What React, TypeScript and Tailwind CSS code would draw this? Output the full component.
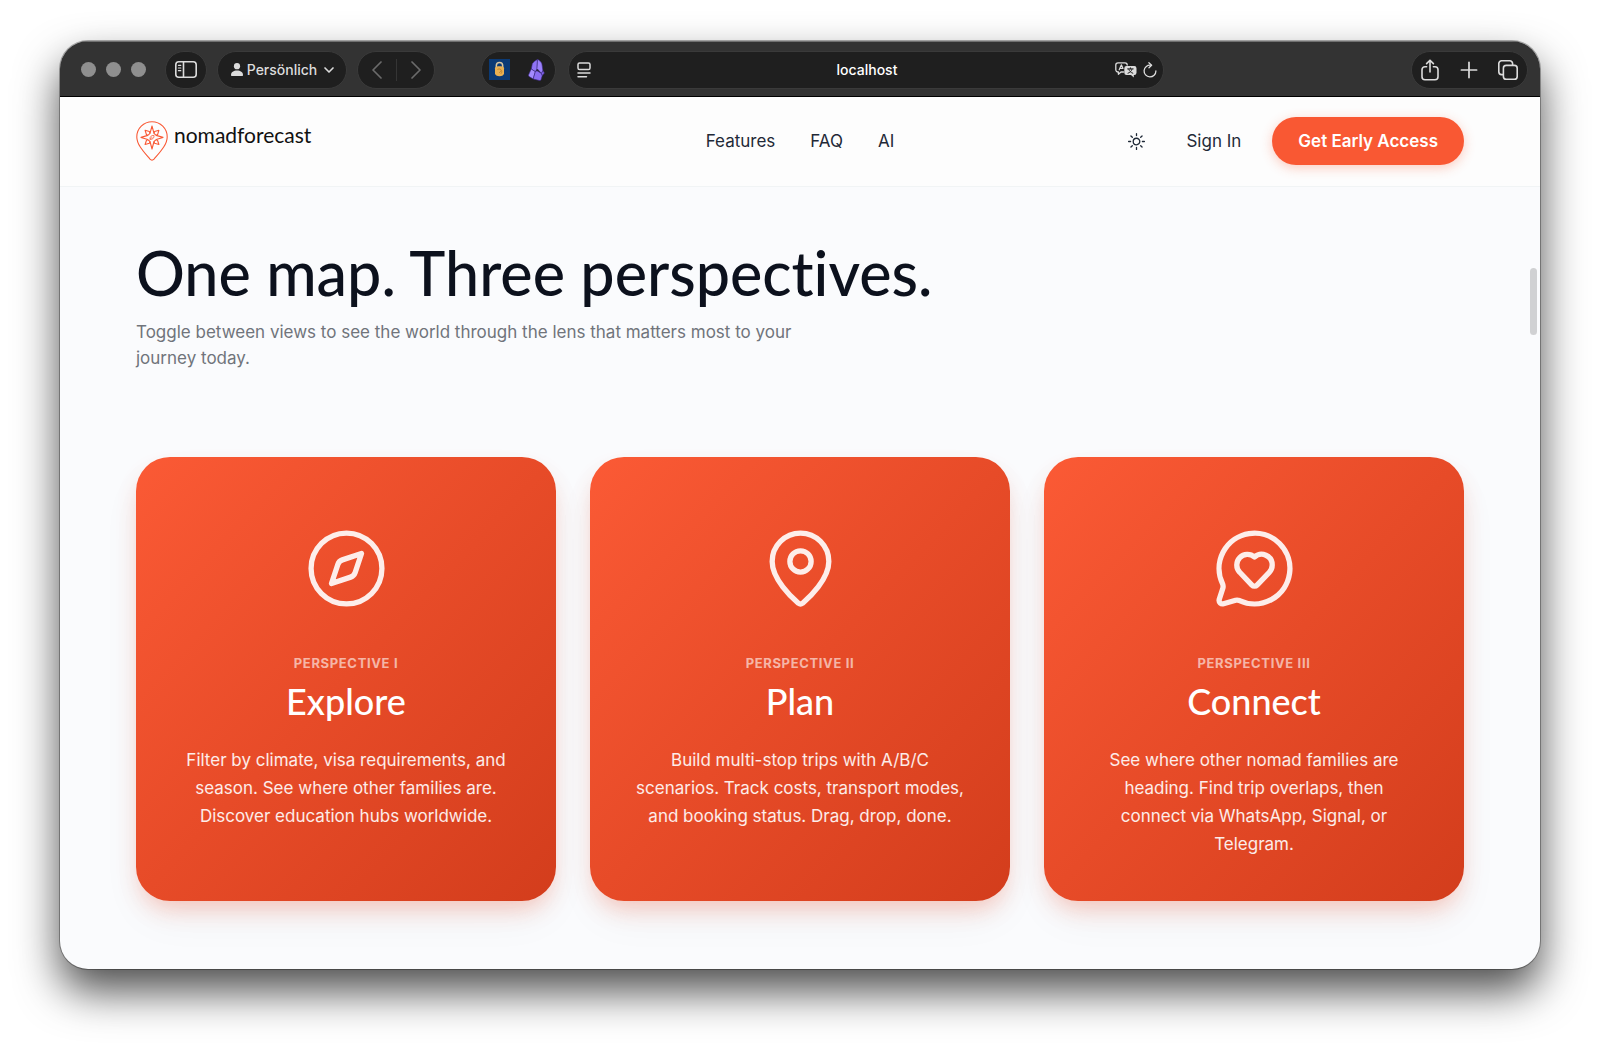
import { ChevronDown, ChevronLeft, ChevronRight, Compass, MapPin, MessageCircleHeart, Plus, type LucideIcon } from "lucide-react";

type Perspective = {
    label: string;
    title: string;
    text: string;
    icon: LucideIcon;
};

const perspectives: Perspective[] = [
    {
        label: "Perspective I",
        title: "Explore",
        text: "Filter by climate, visa requirements, and season. See where other families are. Discover education hubs worldwide.",
        icon: Compass,
    },
    {
        label: "Perspective II",
        title: "Plan",
        text: "Build multi-stop trips with A/B/C scenarios. Track costs, transport modes, and booking status. Drag, drop, done.",
        icon: MapPin,
    },
    {
        label: "Perspective III",
        title: "Connect",
        text: "See where other nomad families are heading. Find trip overlaps, then connect via WhatsApp, Signal, or Telegram.",
        icon: MessageCircleHeart,
    },
];

const pill = "flex h-[38px] shrink-0 items-center rounded-full border border-[#3a3a3a] bg-[#1f1f1f]";

function SidebarIcon() {
    return (
        <svg viewBox="0 0 22 17" className="h-[17px] w-[22px]" fill="none" stroke="currentColor" strokeWidth="1.6" strokeLinecap="round">
            <rect x="0.8" y="0.8" width="20.4" height="15.4" rx="3" />
            <path d="M8.5 1v15" />
            <path d="M3.4 4.3h2.4M3.4 7h2.4M3.4 9.7h2.4" strokeWidth="1.2" />
        </svg>
    );
}

function PersonIcon() {
    return (
        <svg viewBox="0 0 12 13" className="h-[13px] w-3" fill="currentColor">
            <circle cx="6" cy="3.2" r="3.1" />
            <path d="M0 12c0-3 2.6-4.6 6-4.6s6 1.6 6 4.6c0 .6-.3 1-1 1H1c-.7 0-1-.4-1-1Z" />
        </svg>
    );
}

function LockExtensionIcon() {
    return (
        <svg viewBox="0 0 21 21" className="size-[21px]">
            <rect width="21" height="21" fill="#0b3a75" />
            <path d="M7.3 9V6.800a3.200 3.200 0 0 1 6.400 0V9" fill="none" stroke="#d9c7a0" strokeWidth="1.5" />
            <path d="M6 9.200C6 7.800 8 7.200 10.500 7.200s4.500.6 4.500 2v5c0 1.900-2 3-4.500 3S6 16.100 6 14.200Z" fill="#e9b052" />
            <path d="M8.500 10.500c1.400-1 3.400-.6 3.700.8.2 1.300-1.600 1.100-1.700 2.600M12.600 11.500c.5 1.300 0 2.500-.8 3.300" fill="none" stroke="#b07a2a" strokeWidth="0.8" />
        </svg>
    );
}

function CrystalExtensionIcon() {
    return (
        <svg viewBox="0 0 17 22" className="h-[22px] w-[17px]" stroke="#3b2a80" strokeWidth="0.6" strokeLinejoin="round">
            <path d="M9.500.6C8 .8 4.600 4 4.300 4.700L3.300 10l4 2.700 1.800-3Z" fill="#8f73f5" />
            <path d="M9.500.6 9 9.600l4.500 4.800 1.400-2.800-1-6.800C13.500 3.600 10.800.4 9.500.6Z" fill="#9b80fb" />
            <path d="M3.200 10 .6 15.800c-.3.800 0 1.400.6 1.800l4 2.400 2.100-7.300Z" fill="#a48bff" />
            <path d="M7.300 12.700 5.200 20l6.200 1.500c.9.200 1.500-.2 1.700-1l1.200-4-.9-2.100-4.400-2.700Z" fill="#8b6ef3" />
            <path d="m14.900 11.600-1.400 2.800.8 2.200 2.100-2.600Z" fill="#8364ea" />
        </svg>
    );
}

function PageSettingsIcon() {
    return (
        <svg viewBox="0 0 14 16" className="h-4 w-3.5" fill="none" stroke="currentColor" strokeWidth="1.5" strokeLinecap="round">
            <rect x="1" y="0.9" width="12" height="6.6" rx="1.6" />
            <path d="M1 11h12M1 14.700h8.500" />
        </svg>
    );
}

function TranslateIcon() {
    return (
        <svg viewBox="0 0 22 16" className="h-4 w-[22px]" fill="none" stroke="currentColor" strokeLinecap="round" strokeLinejoin="round">
            <path d="M8.500 10H6l-2.600 2.200V10H3A2.200 2.200 0 0 1 .8 7.800V3A2.200 2.200 0 0 1 3 .8h7A2.200 2.200 0 0 1 12.200 3" strokeWidth="1.3" />
            <path d="m4.200 7.800 2.200-5 1.600 3.600M4.900 6.300H7.500" strokeWidth="1.2" />
            <path d="M11.500 4h7.800A2.200 2.200 0 0 1 21.500 6.200v4.600a2.200 2.200 0 0 1-2.200 2.200h-.5v2.600L16 13h-4.500a2.200 2.200 0 0 1-2.200-2.200V6.200A2.200 2.200 0 0 1 11.500 4Z" fill="currentColor" stroke="none" />
            <path d="M12.600 6.900h5.600M15.400 5.800v1M17 7.200c-.5 2-2 3.400-4 4M13.800 7.200c.5 2 2 3.400 4 4" stroke="#1f1f1f" strokeWidth="1" />
        </svg>
    );
}

function ReloadIcon() {
    return (
        <svg viewBox="0 0 14 16" className="h-4 w-3.5" fill="none" stroke="currentColor" strokeWidth="1.3" strokeLinecap="round" strokeLinejoin="round">
            <path d="M7.800 3.200A5.900 5.900 0 1 0 12.900 9" />
            <path d="M5.900.8 8.600 3.300 6 5.800" />
        </svg>
    );
}

function ShareIcon() {
    return (
        <svg viewBox="0 0 18 22" className="h-[22px] w-[18px]" fill="none" stroke="currentColor" strokeWidth="1.6" strokeLinecap="round" strokeLinejoin="round">
            <path d="M5.600 7.800H4a3 3 0 0 0-3 3V17.800a3 3 0 0 0 3 3h10a3 3 0 0 0 3-3V10.800a3 3 0 0 0-3-3h-1.600" />
            <path d="M9 13V1.400M5.600 4.600 9 1.200l3.400 3.400" />
        </svg>
    );
}

function TabsIcon() {
    return (
        <svg viewBox="0 0 20 20" className="size-5" fill="none" stroke="currentColor" strokeWidth="1.6" strokeLinejoin="round">
            <rect x="5.4" y="5.4" width="13.8" height="13.8" rx="2.8" />
            <path d="M5.400 14.600H3.600A2.800 2.800 0 0 1 .8 11.800V3.600A2.800 2.800 0 0 1 3.600.8h8.200a2.800 2.800 0 0 1 2.800 2.800v1.800" />
        </svg>
    );
}

function LogoMark() {
    return (
        <svg viewBox="0 0 32 40" className="h-10 w-8 text-[#f95a36]" fill="none" stroke="currentColor" strokeWidth="1.1" strokeLinejoin="round">
            <path d="M16 .8C7.600.8.8 7.500.8 15.900c0 8 7.600 15.600 13.200 22.300 1.200 1.300 2.800 1.300 4 0 5.600-6.700 13.200-14.300 13.200-22.300C31.200 7.500 24.400.8 16 .8Z" />
            <path d="m16 5 2 7.400 2.200 2 6.800 2-6.800 2.200-2.200 1.900L16 28l-2-7.500-2.200-1.900L5 16.400l6.800-2 2.200-2Z" />
            <path d="m18 12.400.6-1.900 4.300-1.200-1.300 4.200-1.400.9M20.200 18.600l1.400.9 1.300 4-4.300-1.200-.6-1.800M14 20.500l-.6 1.800-4.300 1.200 1.300-4 1.400-.9M11.800 14.400l-1.400-.9-1.300-4.200 4.300 1.200.6 1.900" />
            <path d="M14 18.400c-.4-2.400 1.200-4.200 4-4 .4 2.400-1.200 4.200-4 4Zm0 0 2.300-2.300" strokeWidth="0.8" />
        </svg>
    );
}

function SunIcon() {
    return (
        <svg viewBox="0 0 24 24" className="size-[21px]" fill="none" stroke="currentColor" strokeWidth="1.5" strokeLinecap="round" strokeLinejoin="round">
            <path d="M12 3v2.250m6.364.386-1.591 1.591M21 12h-2.250m-.386 6.364-1.591-1.591M12 18.750V21m-4.773-4.227-1.591 1.591M5.250 12H3m4.227-4.773L5.636 5.636M15.750 12a3.750 3.750 0 1 1-7.500 0 3.750 3.750 0 0 1 7.500 0Z" />
        </svg>
    );
}

function BrowserToolbar() {
    return (
        <div className="flex h-14 items-center border-b border-black bg-[#333333] pt-0.5 pr-3 pl-[21px] text-[#dcdcdc] shadow-[inset_0_1px_0_#707070]">
            <div className="mr-[19px] flex shrink-0 gap-2.5">
                <span className="size-[15px] rounded-full bg-[#8f8f8f]" />
                <span className="size-[15px] rounded-full bg-[#8f8f8f]" />
                <span className="size-[15px] rounded-full bg-[#8f8f8f]" />
            </div>

            <button aria-label="Sidebar" className={`${pill} mr-2.5 w-[42px] justify-center`}>
                <SidebarIcon />
            </button>
            <button className={`${pill} mr-2.5 w-[130px] justify-center gap-1 pl-1 text-sm font-medium`}>
                <PersonIcon />
                Persönlich
                <ChevronDown className="size-4" strokeWidth={2.5} />
            </button>

            <div className={`${pill} mr-[46px] w-[78px] justify-center gap-[3px] text-[#6b6b6b]`}>
                <button aria-label="Back">
                    <ChevronLeft className="size-8" strokeWidth={1.3} />
                </button>
                <span className="h-[22px] w-px bg-[#353535]" />
                <button aria-label="Forward">
                    <ChevronRight className="size-8" strokeWidth={1.3} />
                </button>
            </div>

            <div className={`${pill} mr-3 w-[75px] justify-between pr-2.5 pl-[7px]`}>
                <button aria-label="Password extension">
                    <LockExtensionIcon />
                </button>
                <button aria-label="Notes extension">
                    <CrystalExtensionIcon />
                </button>
            </div>

            <div className="mr-[247px] flex h-[38px] min-w-0 flex-1 items-center gap-1.5 rounded-full border border-[#3a3a3a] bg-[#1f1f1f] pr-1.5 pl-2">
                <button aria-label="Page settings">
                    <PageSettingsIcon />
                </button>
                <input
                    aria-label="Address"
                    defaultValue="localhost"
                    className="min-w-0 flex-1 bg-transparent pl-7 text-center text-sm font-medium text-white outline-none"
                />
                <button aria-label="Translate">
                    <TranslateIcon />
                </button>
                <button aria-label="Reload">
                    <ReloadIcon />
                </button>
            </div>

            <div className={`${pill} w-[117px] justify-between px-[9px]`}>
                <button aria-label="Share">
                    <ShareIcon />
                </button>
                <button aria-label="New tab">
                    <Plus className="size-[26px]" strokeWidth={1.6} />
                </button>
                <button aria-label="Tabs">
                    <TabsIcon />
                </button>
            </div>
        </div>
    );
}

function SiteHeader() {
    return (
        <header className="flex items-center border-b border-[#f1f4f5] bg-[#fdfdfd] px-[76px] pt-5 pb-[21px] text-[17px] leading-[26px] text-[#1f2937]">
            <div className="flex flex-1">
                <a href="#" className="flex items-center gap-1.5 text-[21px] leading-8 text-[#111111]">
                    <LogoMark />
                    <span className="pb-3 font-[Lato]">nomadforecast</span>
                </a>
            </div>
            <nav className="flex gap-[35px]">
                <a href="#features">Features</a>
                <a href="#faq">FAQ</a>
                <a href="#ai">AI</a>
            </nav>
            <div className="flex flex-1 items-center justify-end">
                <button aria-label="Toggle theme" className="mr-[39px]">
                    <SunIcon />
                </button>
                <a href="#signin" className="mr-[31px]">Sign In</a>
                <button className="h-12 rounded-full bg-[#f95833] px-[26px] font-semibold text-white shadow-[0_3px_12px_rgba(249,88,51,0.3)]">
                    Get Early Access
                </button>
            </div>
        </header>
    );
}

function PerspectiveCard({ item }: { item: Perspective }) {
    const Icon = item.icon;

    return (
        <article className="flex flex-col items-center rounded-[34px] bg-linear-to-br from-[#fb5a35] via-[#e74b28] to-[#d33d1c] px-[46px] pt-[69px] pb-[43px] text-center text-white shadow-[0_12px_24px_-6px_rgba(249,88,51,0.32),0_20px_44px_-4px_rgba(60,20,10,0.05)]">
            <Icon className="mb-[42px] size-[85px] text-white/90" strokeWidth={1.5} />
            <p className="text-[13px] leading-5 font-bold tracking-wider text-white/60 uppercase">{item.label}</p>
            <h3 className="mt-2 font-[Lato] text-4xl leading-10 font-medium">{item.title}</h3>
            <p className="mt-[25px] text-[17px] leading-7 text-white/90">{item.text}</p>
        </article>
    );
}

export default function App() {
    return (
        <div className="min-h-screen bg-white px-[60px] pt-[41px] pb-20 font-[Inter,sans-serif]">
            <div className="relative overflow-hidden rounded-[28px] bg-[#fafbfd] shadow-[0_0_0_1px_rgba(0,0,0,0.3),0_22px_44px_rgba(0,0,0,0.7)]">
                <BrowserToolbar />
                <SiteHeader />

                <main className="px-[76px] pt-[50px] pb-[68px]">
                    <h2 className="font-[Lato] text-[61px] leading-[72px] font-medium text-[#0c111d] [font-variant-ligatures:none]">
                        One map. Three perspectives.
                    </h2>
                    <p className="mt-2.5 max-w-[714px] text-[17px] leading-[26px] text-[#70747b]">
                        Toggle between views to see the world through the lens that matters most to your journey today.
                    </p>

                    <div className="mt-[86px] grid grid-cols-3 gap-[34px]">
                        {perspectives.map((item) => (
                            <PerspectiveCard key={item.title} item={item} />
                        ))}
                    </div>
                </main>

                {/* Scroll thumb */}
                <div className="absolute top-[227px] right-[3px] h-[67px] w-[7px] rounded-full bg-[#d0d1d3]" />
            </div>
        </div>
    );
}
